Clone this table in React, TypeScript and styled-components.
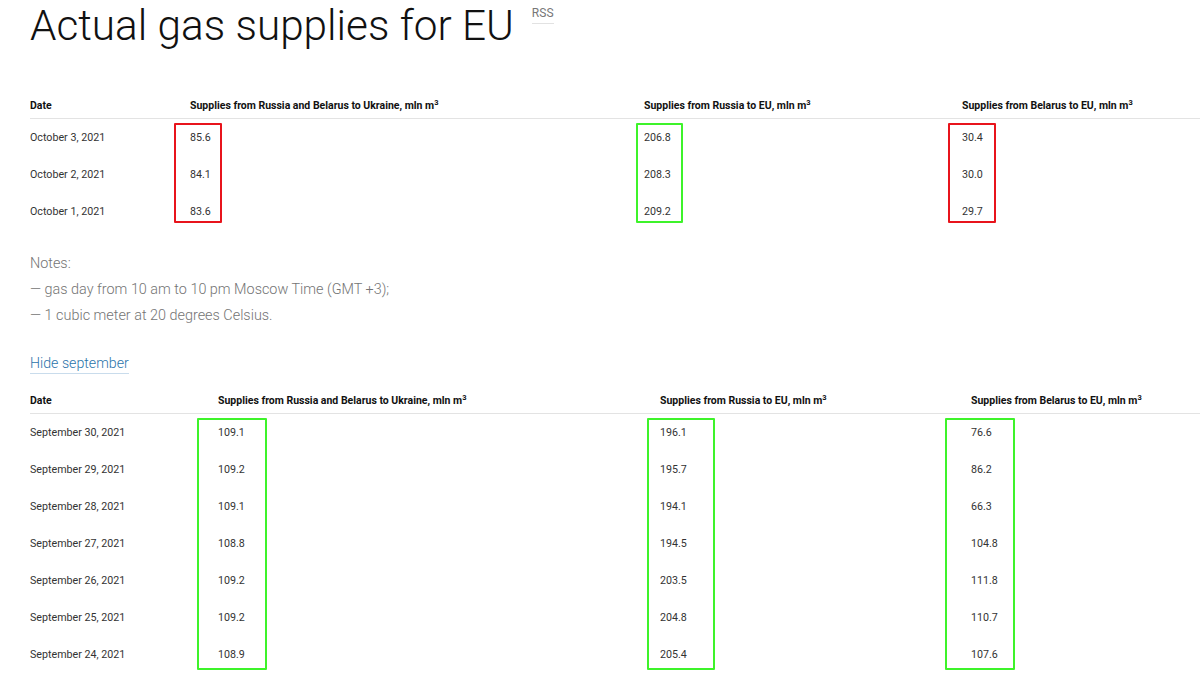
import React from 'react';
import styled, { createGlobalStyle } from 'styled-components';

type Column = {
  title: string;
  unit?: boolean;
  width?: number;
  values: string[];
  box?: { left: number; width: number; color: string };
};

const october: Column[] = [
  { title: 'Date', width: 160, values: ['October 3, 2021', 'October 2, 2021', 'October 1, 2021'] },
  {
    title: 'Supplies from Russia and Belarus to Ukraine, mln m',
    unit: true,
    width: 454,
    values: ['85.6', '84.1', '83.6'],
    box: { left: -16, width: 48, color: '#e8141c' },
  },
  {
    title: 'Supplies from Russia to EU, mln m',
    unit: true,
    width: 318,
    values: ['206.8', '208.3', '209.2'],
    box: { left: -8, width: 47, color: '#3ef32a' },
  },
  {
    title: 'Supplies from Belarus to EU, mln m',
    unit: true,
    values: ['30.4', '30.0', '29.7'],
    box: { left: -14, width: 48, color: '#e8141c' },
  },
];

const september: Column[] = [
  {
    title: 'Date',
    width: 188,
    values: [
      'September 30, 2021',
      'September 29, 2021',
      'September 28, 2021',
      'September 27, 2021',
      'September 26, 2021',
      'September 25, 2021',
      'September 24, 2021',
    ],
  },
  {
    title: 'Supplies from Russia and Belarus to Ukraine, mln m',
    unit: true,
    width: 442,
    values: ['109.1', '109.2', '109.1', '108.8', '109.2', '109.2', '108.9'],
    box: { left: -21, width: 70, color: '#3ef32a' },
  },
  {
    title: 'Supplies from Russia to EU, mln m',
    unit: true,
    width: 311,
    values: ['196.1', '195.7', '194.1', '194.5', '203.5', '204.8', '205.4'],
    box: { left: -13, width: 68, color: '#3ef32a' },
  },
  {
    title: 'Supplies from Belarus to EU, mln m',
    unit: true,
    values: ['76.6', '86.2', '66.3', '104.8', '111.8', '110.7', '107.6'],
    box: { left: -26, width: 70, color: '#3ef32a' },
  },
];

const SupplyTable: React.FC<{ columns: Column[]; boxTop: number; boxBottom: number }> = ({
  columns,
  boxTop,
  boxBottom,
}) => (
  <Table>
    {columns.map((col) => (
      <Col key={col.title} $width={col.width}>
        <HeadCell>
          {col.title}
          {col.unit && <sup>3</sup>}
        </HeadCell>
        <Body>
          {col.values.map((v, i) => (
            <Cell key={i}>{v}</Cell>
          ))}
          {col.box && (
            <Box
              $left={col.box.left}
              $width={col.box.width}
              $color={col.box.color}
              $top={boxTop}
              $bottom={boxBottom}
            />
          )}
        </Body>
      </Col>
    ))}
  </Table>
);

export default function App() {
  return (
    <>
      <GlobalStyle />
      <Page>
        <TitleRow>
          <Title>Actual gas supplies for EU</Title>
          <Rss>RSS</Rss>
        </TitleRow>
        <SupplyTable columns={october} boxTop={4} boxBottom={7} />
        <Notes>
          <p>Notes:</p>
          <p>— gas day from 10 am to 10 pm Moscow Time (GMT +3);</p>
          <p>— 1 cubic meter at 20 degrees Celsius.</p>
        </Notes>
        <Toggle>Hide september</Toggle>
        <SupplyTable columns={september} boxTop={4} boxBottom={3} />
      </Page>
    </>
  );
}

const GlobalStyle = createGlobalStyle`
  body {
    margin: 0;
    background: #fff;
    font-family: Roboto, "Liberation Sans", sans-serif;
    overflow: hidden;
  }
  p { margin: 0; }
`;

const Page = styled.div`
  padding-left: 30px;
`;

const TitleRow = styled.div`
  display: flex;
  align-items: flex-start;
  gap: 18px;
  height: 93px;
`;

const Title = styled.h1`
  margin: 0;
  padding-top: 1px;
  font-size: 42.3px;
  font-weight: 300;
  line-height: 50px;
  color: #111;
`;

const Rss = styled.span`
  margin-top: 6px;
  font-size: 12px;
  line-height: 14px;
  color: #777;
  padding-bottom: 3px;
  border-bottom: 1px solid #e2e2e2;
`;

const Table = styled.div`
  display: flex;
`;

const Col = styled.div<{ $width?: number }>`
  display: flex;
  flex-direction: column;
  ${(p) => (p.$width ? `width: ${p.$width}px; flex: none;` : 'flex: 1;')}
`;

const HeadCell = styled.div`
  height: 26px;
  box-sizing: border-box;
  border-bottom: 1px solid #e3e3e3;
  font-size: 10.5px;
  font-weight: 700;
  color: #111;
  line-height: 26px;
  white-space: nowrap;
  sup {
    font-size: 7.5px;
    line-height: 0;
    vertical-align: 4px;
  }
`;

const Body = styled.div`
  position: relative;
`;

const Cell = styled.div`
  height: 37px;
  line-height: 37px;
  font-size: 10.7px;
  color: #333;
  white-space: nowrap;
`;

const Box = styled.div<{ $left: number; $width: number; $color: string; $top: number; $bottom: number }>`
  position: absolute;
  left: ${(p) => p.$left}px;
  width: ${(p) => p.$width}px;
  top: ${(p) => p.$top}px;
  bottom: ${(p) => p.$bottom}px;
  box-sizing: border-box;
  border: 2px solid ${(p) => p.$color};
  border-radius: 1px;
`;

const Notes = styled.div`
  margin-top: 21px;
  font-size: 14.4px;
  font-weight: 300;
  line-height: 26px;
  color: #747474;
`;

const Toggle = styled.a`
  display: inline-block;
  margin-top: 24px;
  margin-bottom: 14px;
  font-size: 14.2px;
  font-weight: 300;
  line-height: 20px;
  color: #2a73aa;
  border-bottom: 1px solid #c9dcec;
  cursor: pointer;
`;
